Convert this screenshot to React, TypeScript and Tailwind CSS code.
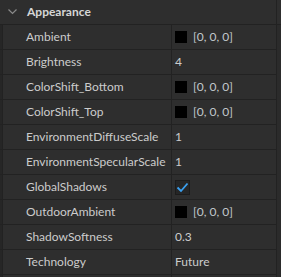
import React from 'react';

type Prop = {
  name: string;
  value: string;
  kind?: 'color' | 'bool' | 'text';
};

const props: Prop[] = [
  { name: 'Ambient', value: '[0, 0, 0]', kind: 'color' },
  { name: 'Brightness', value: '4' },
  { name: 'ColorShift_Bottom', value: '[0, 0, 0]', kind: 'color' },
  { name: 'ColorShift_Top', value: '[0, 0, 0]', kind: 'color' },
  { name: 'EnvironmentDiffuseScale', value: '1' },
  { name: 'EnvironmentSpecularScale', value: '1' },
  { name: 'GlobalShadows', value: 'true', kind: 'bool' },
  { name: 'OutdoorAmbient', value: '[0, 0, 0]', kind: 'color' },
  { name: 'ShadowSoftness', value: '0.3' },
  { name: 'Technology', value: 'Future' },
];

function Value({ p }: { p: Prop }) {
  if (p.kind === 'color') {
    return (
      <div className="flex items-center gap-[6px]">
        <div className="w-[12px] h-[12px] bg-black" />
        <span className="text-[#c2c8cc]">{p.value}</span>
      </div>
    );
  }
  if (p.kind === 'bool') {
    return (
      <div className="w-[15px] h-[15px] bg-[#262626] border border-[#1c1c1c] flex items-center justify-center">
        <svg width="13" height="11" viewBox="0 0 13 11" fill="none">
          <path d="M1.5 5.5 L5 9 L11.5 1.5" stroke="#3aa0f0" strokeWidth="1.8" />
        </svg>
      </div>
    );
  }
  return <span className="text-[#cccccc]">{p.value}</span>;
}

export default function App() {
  return (
    <div
      className="w-[281px] h-[277px] overflow-hidden bg-[#2e2e2e] flex text-[12px] text-[#cccccc]"
      style={{ fontFamily: 'Lato, "Open Sans", sans-serif' }}
    >
      <div className="w-[277px] border-r border-[#222222] flex flex-col">
        {/* category header */}
        <div className="h-[25px] shrink-0 flex items-center border-b border-[#222222] bg-[#2e2e2e]">
          <svg className="ml-[8px] mr-[10px]" width="9" height="6" viewBox="0 0 9 6" fill="none">
            <path d="M0.5 0.5 L4.5 4.5 L8.5 0.5" stroke="#8a8a8a" strokeWidth="1.2" />
          </svg>
          <span className="font-bold text-[#d6d6d6]">Appearance</span>
        </div>
        {props.map((p) => (
          <div key={p.name} className="h-[25px] shrink-0 flex border-b border-[#222222]">
            <div className="w-[3px] bg-[#262626] border-r border-[#222222]" />
            <div className="w-[169px] shrink-0 flex items-center pl-[23px] border-r border-[#222222] overflow-hidden whitespace-nowrap">
              {p.name}
            </div>
            <div className="flex-1 flex items-center pl-[3px]">
              <Value p={p} />
            </div>
          </div>
        ))}
        <div className="flex shrink-0 h-[10px]">
          <div className="w-[3px] bg-[#262626] border-r border-[#222222]" />
          <div className="w-[169px] border-r border-[#222222]" />
        </div>
      </div>
      <div className="w-[4px] flex flex-col">
        <div className="h-[25px] border-b border-[#222222]" />
        <div className="flex-1 bg-[#2b2b2b]" />
      </div>
    </div>
  );
}
